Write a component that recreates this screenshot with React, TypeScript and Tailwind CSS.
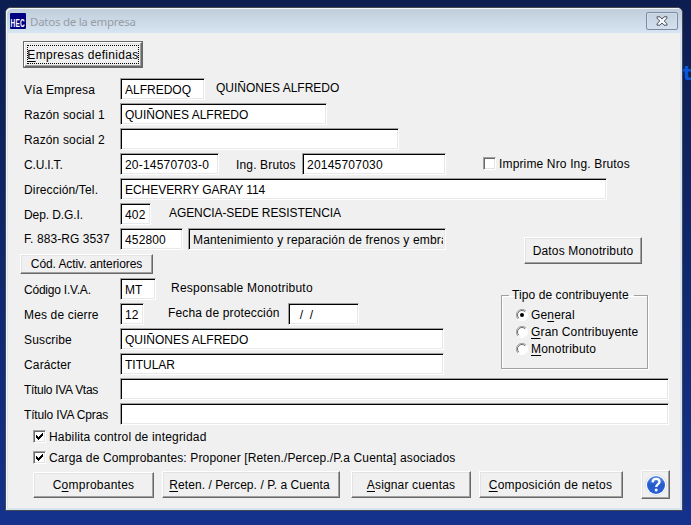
import type { ReactNode } from "react";

function Field({ className, children }: { className: string; children?: ReactNode }) {
  return (
    <div
      className={`h-[22px] shrink-0 border border-t-[#a0a0a0] border-l-[#a0a0a0] border-r-white border-b-white pr-[2px] pl-1 leading-[22px] shadow-[inset_1px_1px_0_#000,inset_-1px_-1px_0_#e8e8e8] ${className}`}
    >
      <div className="h-5 overflow-hidden whitespace-pre">{children}</div>
    </div>
  );
}

function Row({ label, labelClass = "", children }: { label: string; labelClass?: string; children?: ReactNode }) {
  return (
    <div className="flex h-[25px] shrink-0 items-start">
      <div className={`w-[96px] shrink-0 whitespace-nowrap ${labelClass || "leading-6"}`}>{label}</div>
      {children}
    </div>
  );
}

function Button({ className, children }: { className: string; children?: ReactNode }) {
  return (
    <button
      className={`flex shrink-0 items-center justify-center border border-t-white border-l-white border-r-[#696969] border-b-[#696969] bg-[#f0f0f0] shadow-[inset_-1px_-1px_0_#a0a0a0,inset_1px_1px_0_#e3e3e3] ${className}`}
    >
      {children}
    </button>
  );
}

function Check({ checked = false }: { checked?: boolean }) {
  return (
    <div className="h-[13px] w-[13px] shrink-0 border border-t-[#a0a0a0] border-l-[#a0a0a0] border-r-white border-b-white bg-white shadow-[inset_1px_1px_0_#696969,inset_-1px_-1px_0_#e3e3e3]">
      {checked && (
        <svg viewBox="0 0 11 11" className="block h-[11px] w-[11px]" shapeRendering="crispEdges">
          <path d="M2 4h1v1h1v1h1v-1h1v-1h1v-1h1v-1h1v3h-1v1h-1v1h-1v1h-1v1h-1v-1h-1v-1h-1z" fill="#000" />
        </svg>
      )}
    </div>
  );
}

function Radio({ on = false, children }: { on?: boolean; children: ReactNode }) {
  return (
    <div className="flex h-[17px] items-center">
      <svg viewBox="0 0 12 12" className="mr-[3px] block h-3 w-3">
        <circle cx="6" cy="6" r="5" fill="#fff" />
        <path d="M2 10A5.5 5.5 0 0 1 10 2" fill="none" stroke="#a0a0a0" />
        <path d="M2.8 9.2A4.5 4.5 0 0 1 9.2 2.8" fill="none" stroke="#696969" />
        <path d="M10 2A5.5 5.5 0 0 1 2 10" fill="none" stroke="#fff" />
        {on && <circle cx="6" cy="6" r="2" fill="#000" />}
      </svg>
      <span>{children}</span>
    </div>
  );
}

const U = ({ children }: { children: string }) => (
  <span className="underline decoration-1 underline-offset-2">{children}</span>
);

export default function App() {
  return (
    <div className="relative h-[525px] w-[691px] overflow-hidden bg-linear-to-b from-[#0c1d50] to-[#14328d] pt-[7px] pl-[5px] font-['Liberation_Sans',Arial,sans-serif] text-[12px] tracking-[0.15px] text-black">
      <span className="absolute top-[59px] left-[683px] font-['DejaVu_Sans',sans-serif] text-[19px] leading-7 font-bold text-[#0757d6]">t</span>
      <div className="flex h-[504px] w-[678px] flex-col rounded-t-[6px] border border-[#45494f] bg-[#d7e4f2] shadow-[inset_1px_1px_0_#f4f8fc]">
        <div className="flex h-[25px] shrink-0 items-start rounded-t-[5px] bg-linear-to-b from-[#bfcddb] to-[#d7e4f2] pl-1 shadow-[inset_1px_1px_0_#f4f8fc]">
          <div className="mt-[5px] flex h-4 w-4 items-end justify-center rounded-[1px] bg-[#000080] pb-px">
            <span className="origin-bottom scale-x-[.62] text-[10.5px] leading-[9px] font-bold tracking-[0.4px] text-white">HEC</span>
          </div>
          <div className="mt-[6px] ml-1 font-['Noto_Sans','Open_Sans',sans-serif] text-[11.5px] leading-4 tracking-[-0.26px] text-[#979da4]">
            Datos de la empresa
          </div>
          <div className="mt-1 mr-1 ml-auto flex h-[18px] w-8 items-center justify-center rounded-[2px] border border-[#7d8ba5] shadow-[inset_0_0_0_1px_#d3deea]">
            <svg viewBox="0 0 12 10" className="h-[10px] w-3">
              <path d="M1 .8h3L6 3 8 .8h3v1.5L8.2 5 11 7.7v1.5H8L6 7 4 9.2H1V7.7L3.8 5 1 2.3z" fill="#f3f5f7" stroke="#4d5361" />
            </svg>
          </div>
        </div>

        <div className="ml-[2px] flex h-[475px] w-[672px] flex-col bg-[#f0f0f0] pt-2 pl-4">
          <div className="-ml-px h-[27px] w-[120px] shrink-0 border border-[#696969]">
            <Button className="h-[25px] w-[118px]">
              <span className="flex h-[19px] w-[112px] items-center justify-center border border-dotted border-black tracking-[0.33px] whitespace-nowrap">
                <span><U>E</U>mpresas definidas</span>
              </span>
            </Button>
          </div>

          <div className="mt-[10px] flex flex-col">
            <Row label="Vía Empresa">
              <Field className="w-[85px] bg-white tracking-normal">ALFREDOQ</Field>
              <span className="ml-[11px] leading-5 tracking-normal">QUIÑONES ALFREDO</span>
            </Row>
            <Row label="Razón social 1">
              <Field className="w-[207px] bg-white tracking-normal">QUIÑONES ALFREDO</Field>
            </Row>
            <Row label="Razón social 2">
              <Field className="w-[279px] bg-white" />
            </Row>
            <Row label="C.U.I.T." labelClass="leading-6 tracking-[-0.18px]">
              <Field className="w-[99px] bg-white tracking-[0.2px]">20-14570703-0</Field>
              <span className="ml-[17px] w-[66px] leading-6">Ing. Brutos</span>
              <Field className="w-[144px] bg-white tracking-[0.22px]">20145707030</Field>
              <div className="mt-1 ml-[37px]"><Check /></div>
              <span className="ml-[3px] leading-[22px]">Imprime Nro Ing. Brutos</span>
            </Row>
            <Row label="Dirección/Tel.">
              <Field className="w-[487px] bg-white tracking-[-0.04px]">ECHEVERRY GARAY 114</Field>
            </Row>
            <Row label="Dep. D.G.I." labelClass="leading-6 tracking-[-0.1px]">
              <Field className="w-[31px] bg-white">402</Field>
              <span className="ml-[18px] leading-5 tracking-[-0.09px]">AGENCIA-SEDE RESISTENCIA</span>
            </Row>
          </div>

          <div className="flex h-[150px] shrink-0">
            <div className="flex w-[477px] flex-col">
              <Row label="F. 883-RG 3537" labelClass="leading-[22px] tracking-[0.08px]">
                <Field className="w-[63px] bg-white">452800</Field>
                <Field className="ml-[5px] w-[258px]">Mantenimiento y reparación de frenos y embra</Field>
              </Row>
              <div className="-ml-1 h-[25px] pt-px">
                <Button className="h-5 w-[133px] tracking-[-0.08px]">Cód. Activ. anteriores</Button>
              </div>
              <Row label="Código I.V.A." labelClass="leading-6 tracking-[-0.22px]">
                <Field className="w-[36px] bg-white tracking-normal">MT</Field>
                <span className="ml-[15px] leading-5 tracking-[0.22px]">Responsable Monotributo</span>
              </Row>
              <Row label="Mes de cierre">
                <Field className="w-6 bg-white">12</Field>
                <span className="ml-6 w-[120px] leading-5">Fecha de protección</span>
                <Field className="w-[71px] bg-white tracking-normal">{"  /  /"}</Field>
              </Row>
              <Row label="Suscribe">
                <Field className="w-[324px] bg-white tracking-normal">QUIÑONES ALFREDO</Field>
              </Row>
              <Row label="Carácter">
                <Field className="w-[324px] bg-white tracking-normal">TITULAR</Field>
              </Row>
            </div>
            <div className="flex flex-col pt-[9px]">
              <Button className="ml-[23px] h-[27px] w-[118px]">Datos Monotributo</Button>
              <fieldset className="mt-[23px] h-[82px] w-[147px] border border-[#a0a0a0] pl-[14px] shadow-[1px_1px_0_#fff,inset_1px_1px_0_#fff]">
                <legend className="-ml-[7px] h-4 pr-[5px] pl-[3px] leading-4 tracking-[0.08px] whitespace-nowrap">Tipo de contribuyente</legend>
                <div className="pt-[3px]">
                  <Radio on>Ge<U>n</U>eral</Radio>
                  <Radio><U>G</U>ran Contribuyente</Radio>
                  <Radio><U>M</U>onotributo</Radio>
                </div>
              </fieldset>
            </div>
          </div>

          <Row label="Título IVA Vtas" labelClass="leading-6 tracking-[-0.3px]"><Field className="w-[549px] bg-white" /></Row>
          <Row label="Título IVA Cpras" labelClass="leading-6 tracking-[-0.15px]"><Field className="w-[549px] bg-white" /></Row>

          <div className="mt-[2px] ml-[9px] flex h-[21px] shrink-0 items-start">
            <Check checked />
            <span className="ml-[3px] leading-[14px] tracking-[0.18px]">Habilita control de integridad</span>
          </div>
          <div className="ml-[9px] flex h-[19px] shrink-0 items-start">
            <Check checked />
            <span className="ml-[3px] leading-[14px] tracking-[0.14px]">Carga de Comprobantes: Proponer [Reten./Percep./P.a Cuenta] asociados</span>
          </div>
          <div className="ml-[9px] flex h-[29px] shrink-0 items-start">
            <Button className="mt-[2px] h-[26px] w-[121px] tracking-[0.24px]"><span>C<U>o</U>mprobantes</span></Button>
            <Button className="mt-px ml-2 h-[27px] w-[178px]"><span className="-ml-[3px] tracking-[0.06px]"><U>R</U>eten. / Percep. / P. a Cuenta</span></Button>
            <Button className="mt-px ml-[11px] h-[27px] w-[120px]"><span><U>A</U>signar cuentas</span></Button>
            <Button className="mt-px ml-2 h-[27px] w-[144px]"><span className="-ml-px tracking-[0.24px]"><U>C</U>omposición de netos</span></Button>
            <Button className="ml-[18px] h-[29px] w-[29px]">
              <svg viewBox="0 0 22 22" className="h-[22px] w-[22px]">
                <defs>
                  <linearGradient id="help" x1="0" y1="0" x2="0" y2="1">
                    <stop offset="0" stopColor="#5b8ce8" />
                    <stop offset=".5" stopColor="#2459cc" />
                    <stop offset="1" stopColor="#2b62d4" />
                  </linearGradient>
                </defs>
                <circle cx="11" cy="11" r="10.5" fill="#fff" stroke="#c8d4ea" strokeWidth=".7" />
                <circle cx="11" cy="11" r="9" fill="url(#help)" />
                <path d="M7.6 8.3C7.8 5.8 9.3 4.9 11.1 4.9c2.1 0 3.4 1.2 3.4 2.9 0 2.6-3.3 2.5-3.3 5.1" fill="none" stroke="#fff" strokeWidth="2.3" />
                <circle cx="11.2" cy="16.1" r="1.5" fill="#fff" />
              </svg>
            </Button>
          </div>
        </div>
      </div>
    </div>
  );
}
